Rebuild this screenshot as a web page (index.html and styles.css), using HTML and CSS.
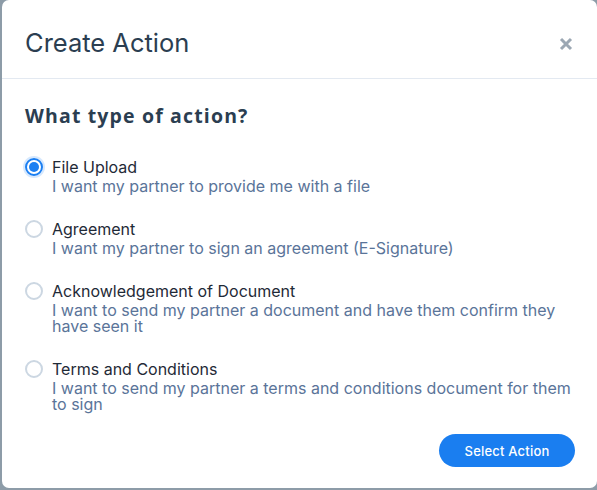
FILE: index.html
```html
<!DOCTYPE html>
<html>
<head>
<meta charset="utf-8">
<link rel="stylesheet" href="styles.css">
</head>
<body>
<div class="modal">
  <div class="modal-header">
    <h1 class="title">Create Action</h1>
    <button class="close" aria-label="Close">
      <svg width="14" height="14" viewBox="0 0 14 14"><path d="M2 2 L12 12 M12 2 L2 12" stroke="#9ba7b3" stroke-width="3" stroke-linecap="butt"/></svg>
    </button>
  </div>
  <div class="modal-body">
    <h2 class="question">What type of action?</h2>
    <div class="options">
      <label class="option">
        <span class="radio checked"><span class="dot"></span></span>
        <span class="text">
          <span class="label">File Upload</span>
          <span class="desc">I want my partner to provide me with a file</span>
        </span>
      </label>
      <label class="option">
        <span class="radio"></span>
        <span class="text">
          <span class="label">Agreement</span>
          <span class="desc">I want my partner to sign an agreement (E-Signature)</span>
        </span>
      </label>
      <label class="option">
        <span class="radio"></span>
        <span class="text">
          <span class="label">Acknowledgement of Document</span>
          <span class="desc">I want to send my partner a document and have them confirm they have seen it</span>
        </span>
      </label>
      <label class="option">
        <span class="radio"></span>
        <span class="text">
          <span class="label">Terms and Conditions</span>
          <span class="desc">I want to send my partner a terms and conditions document for them to sign</span>
        </span>
      </label>
    </div>
    <div class="footer">
      <button class="primary">Select Action</button>
    </div>
  </div>
</div>
</body>
</html>
```
FILE: styles.css
```css
html, body {
  margin: 0;
  padding: 0;
}
body {
  background: #8d9ca8;
  width: 597px;
  height: 490px;
  overflow: hidden;
  font-family: Inter, "Noto Sans", sans-serif;
}
.modal {
  margin-left: 2px;
  width: 595px;
  height: 488px;
  background: #ffffff;
  border-radius: 7px;
  box-sizing: border-box;
  display: flex;
  flex-direction: column;
}
.modal-header {
  height: 79px;
  box-sizing: border-box;
  border-bottom: 1px solid #e3e9f1;
  display: flex;
  align-items: center;
  justify-content: space-between;
  padding: 0 24px 0 23px;
}
.title {
  margin: 0;
  font-size: 25.5px;
  font-weight: 400;
  color: #2b3e51;
  line-height: 30px;
  padding-top: 7px;
}
.close {
  border: none;
  background: none;
  padding: 0;
  width: 14px;
  height: 14px;
  margin-top: 9px;
  display: flex;
}
.modal-body {
  flex: 1;
  padding: 25px 22px 0 23px;
  display: flex;
  flex-direction: column;
}
.question {
  margin: 0;
  font-family: "Open Sans", sans-serif;
  font-weight: 700;
  font-size: 19.5px;
  line-height: 24px;
  color: #2b3e51;
  letter-spacing: 1.15px;
}
.options {
  margin-top: 29px;
  display: flex;
  flex-direction: column;
  gap: 25px;
}
.option {
  display: flex;
  align-items: flex-start;
}
.radio {
  flex: none;
  width: 18px;
  height: 18px;
  box-sizing: border-box;
  border: 2px solid #ccd7e2;
  border-radius: 50%;
  margin-top: 1px;
  margin-right: 9px;
  display: flex;
  align-items: center;
  justify-content: center;
}
.radio.checked {
  border-color: #1b7ff2;
  box-shadow: 0 0 0 2px rgba(27, 127, 242, 0.18);
}
.dot {
  width: 10px;
  height: 10px;
  border-radius: 50%;
  background: #1b7ff2;
}
.text {
  display: flex;
  flex-direction: column;
}
.label {
  font-size: 16px;
  line-height: 20px;
  color: #1f2a37;
}
.desc {
  margin-top: 1px;
  font-size: 16px;
  line-height: 16px;
  color: #5a7499;
}
.footer {
  display: flex;
  justify-content: flex-end;
  margin-top: 22px;
}
.primary {
  width: 136px;
  height: 33px;
  border: none;
  border-radius: 17px;
  background: #1a7ef0;
  color: #ffffff;
  font-family: Inter, sans-serif;
  font-weight: 500;
  font-size: 13px;
  letter-spacing: 0.2px;
}
```
